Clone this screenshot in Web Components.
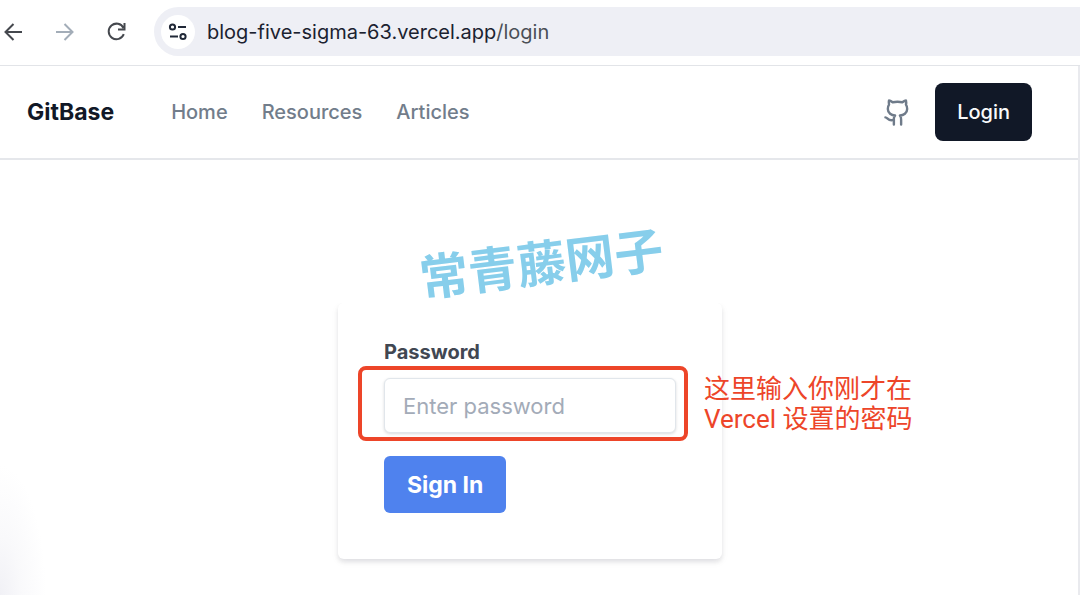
<!DOCTYPE html>
<html lang="zh-CN">
<head>
<meta charset="utf-8">
<meta name="viewport" content="width=device-width, initial-scale=1">
<title>GitBase – Login</title>
<style>
  body { margin: 0; background: #fff; color: #111827; font-family: Inter, "Noto Sans CJK SC", sans-serif; }
</style>
</head>
<body>
<app-window>
  <browser-bar slot="toolbar" host="blog-five-sigma-63.vercel.app" path="/login"></browser-bar>
  <site-nav>
    <nav-link href="#home">Home</nav-link>
    <nav-link href="#resources">Resources</nav-link>
    <nav-link href="#articles">Articles</nav-link>
  </site-nav>
  <login-card>
    <callout-note slot="note">这里输入你刚才在<br>Vercel 设置的密码</callout-note>
  </login-card>
  <water-mark slot="overlay">常青藤网子</water-mark>
</app-window>
<script>
const define = (name, html, setup) => {
  const template = document.createElement('template');
  template.innerHTML = html;
  customElements.define(name, class extends HTMLElement {
    constructor() {
      super();
      this.attachShadow({ mode: 'open' }).append(template.content.cloneNode(true));
    }
    connectedCallback() { if (setup) setup(this, this.shadowRoot); }
  });
};

define('app-window', `
  <style>
    :host { display: flex; flex-direction: column; min-height: 100vh; position: relative; overflow: hidden; }
    main { flex: 1; box-sizing: border-box; border-right: 2px solid #e9eaee; position: relative;
      background: radial-gradient(ellipse 46px 130px at 0 100%, #f1f1f6, #f9f9fb 45%, #fff); }
  </style>
  <slot name="toolbar"></slot>
  <main><slot></slot><slot name="overlay"></slot></main>`);

define('browser-bar', `
  <style>
    :host { display: flex; align-items: center; height: 66px; box-sizing: border-box; padding: 0 0 2px 1px; border-bottom: 1px solid #e2e4e8; }
    .tools { display: flex; gap: 28px; margin-right: 25px; }
    button { display: flex; padding: 0; border: 0; background: none; color: #45484e; }
    button:disabled { color: #a3adb8; }
    svg { fill: none; stroke: currentColor; stroke-width: 2; }
    .address { flex: 1; display: flex; align-items: center; height: 49px; padding-left: 7px; gap: 12px; background: #eeeff5; border-radius: 25px 0 0 25px; }
    .site { width: 34px; height: 34px; border-radius: 50%; background: #fff; color: #202837; align-items: center; justify-content: center; }
    .url { font-size: 20px; line-height: 28px; color: #1b2230; white-space: nowrap; }
    .path { color: #4b4f57; }
  </style>
  <div class="tools">
    <button aria-label="Back"><svg width="24" height="24" viewBox="0 0 24 24"><path d="M21 12H5M12.500 4l-8 8 8 8"/></svg></button>
    <button aria-label="Forward" disabled><svg width="24" height="24" viewBox="0 0 24 24"><path d="M3 12h16M11.500 4l8 8-8 8"/></svg></button>
    <button aria-label="Reload"><svg width="24" height="24" viewBox="0 0 24 24"><path d="M18.500 8A7.800 7.800 0 1 0 18.800 14.200M19.500 3V9.500H13"/></svg></button>
  </div>
  <div class="address">
    <button class="site" aria-label="Site information"><svg width="20" height="20" viewBox="0 0 20 20"><circle cx="4.500" cy="5" r="2.600"/><path d="M10 5h8M2 14.500h8"/><circle cx="15" cy="14.500" r="2.600"/></svg></button>
    <div class="url"><span class="host"></span><span class="path"></span></div>
  </div>`, (el, root) => {
  root.querySelector('.host').textContent = el.getAttribute('host');
  root.querySelector('.path').textContent = el.getAttribute('path');
});

define('nav-link', `
  <style>
    :host { display: block; }
    a { color: #727d8b; text-decoration: none; font-size: 20px; line-height: 28px; font-weight: 500; }
  </style>
  <a><slot></slot></a>`, (el, root) => {
  root.querySelector('a').href = el.getAttribute('href');
});

define('site-nav', `
  <style>
    :host { display: block; border-bottom: 2px solid #e5e7eb; }
    nav { display: flex; align-items: center; padding: 17px 46px 17px 27px; }
    .brand { font-size: 23px; line-height: 32px; font-weight: 700; color: #111827; text-decoration: none; margin-right: 57px; }
    .links { display: flex; gap: 34px; }
    .actions { display: flex; align-items: center; gap: 23px; margin-left: auto; }
    .icon { display: flex; color: #6f7b8a; }
    .login { box-sizing: border-box; height: 58px; padding: 0 22px; border-radius: 8px; background: #111827; color: #f9fafb; font-size: 20px; line-height: 58px; font-weight: 500; text-decoration: none; }
  </style>
  <nav>
    <a class="brand" href="#">GitBase</a>
    <div class="links"><slot></slot></div>
    <div class="actions">
      <a class="icon" href="#github" aria-label="GitHub">
        <svg width="29" height="29" viewBox="0 0 24 24" fill="none" stroke="currentColor" stroke-width="2" stroke-linecap="round" stroke-linejoin="round"><path d="M15 22v-4a4.800 4.800 0 0 0-1-3.500c3 0 6-2 6-5.500.08-1.250-.27-2.480-1-3.500.28-1.150.28-2.350 0-3.500 0 0-1 0-3 1.500-2.640-.5-5.360-.5-8 0C6 2 5 2 5 2c-.3 1.150-.3 2.350 0 3.500A5.403 5.403 0 0 0 4 9c0 3.500 3 5.500 6 5.500-.39.490-.68 1.050-.85 1.650-.17.600-.22 1.230-.15 1.850v4"/><path d="M9 18c-4.510 2-5-2-7-2"/></svg>
      </a>
      <a class="login" href="#login">Login</a>
    </div>
  </nav>`);

define('login-card', `
  <style>
    :host { display: flex; justify-content: center; padding: 143px 18px 35px 0; }
    form { position: relative; box-sizing: border-box; width: 100%; max-width: 384px; padding: 35px 46px 46px; border-radius: 6px; background: #fff; }
    form::before { content: ""; position: absolute; inset: 0; border-radius: 6px; pointer-events: none;
      box-shadow: 0 3px 4px rgba(17,24,39,.09), 0 3px 9px rgba(17,24,39,.05); clip-path: inset(0 -20px -20px -20px); }
    label { display: block; margin-bottom: 11px; font-size: 20px; line-height: 29px; font-weight: 700; color: #414752; }
    .field { position: relative; margin-bottom: 23px; }
    input { display: block; box-sizing: border-box; width: 100%; height: 55px; padding: 0 18px; border: 1px solid #e1e6eb; border-radius: 6px;
      background: #fff; color: #374151; font: 400 22px/32px Inter, sans-serif; box-shadow: 0 1px 3px rgba(17,24,39,.16); }
    input::placeholder { color: #a3abb8; opacity: 1; }
    button { height: 57px; padding: 0 23px; border: 0; border-radius: 6px; background: #4f82ee; color: #fff; font: 700 23px/32px Inter, sans-serif; }
  </style>
  <form>
    <label for="password">Password</label>
    <div class="field">
      <input id="password" type="password" placeholder="Enter password">
      <slot name="note"></slot>
    </div>
    <button type="button">Sign In</button>
  </form>`);

define('callout-note', `
  <style>
    :host { position: absolute; inset: -12px -12px -8px -26px; box-sizing: border-box; border: 4px solid #ed4529; border-radius: 8px; pointer-events: none; }
    p { position: absolute; left: 100%; top: 50%; transform: translateY(-50%); margin: 0 0 0 20px; color: #ed4529;
      font-family: Roboto, "Noto Sans CJK SC", sans-serif; font-size: 26px; line-height: 30px; font-weight: 400; white-space: nowrap; }
  </style>
  <p><slot></slot></p>`);

define('water-mark', `
  <style>
    :host { position: absolute; left: 50%; top: 195px; transform: translate(-50%, -50%) rotate(-7deg); color: #87ceeb; padding-left: 4px;
      font-family: "Noto Sans CJK SC", sans-serif; font-size: 49px; line-height: 56px; font-weight: 700; white-space: nowrap; pointer-events: none; }
  </style>
  <slot></slot>`);
</script>
</body>
</html>
